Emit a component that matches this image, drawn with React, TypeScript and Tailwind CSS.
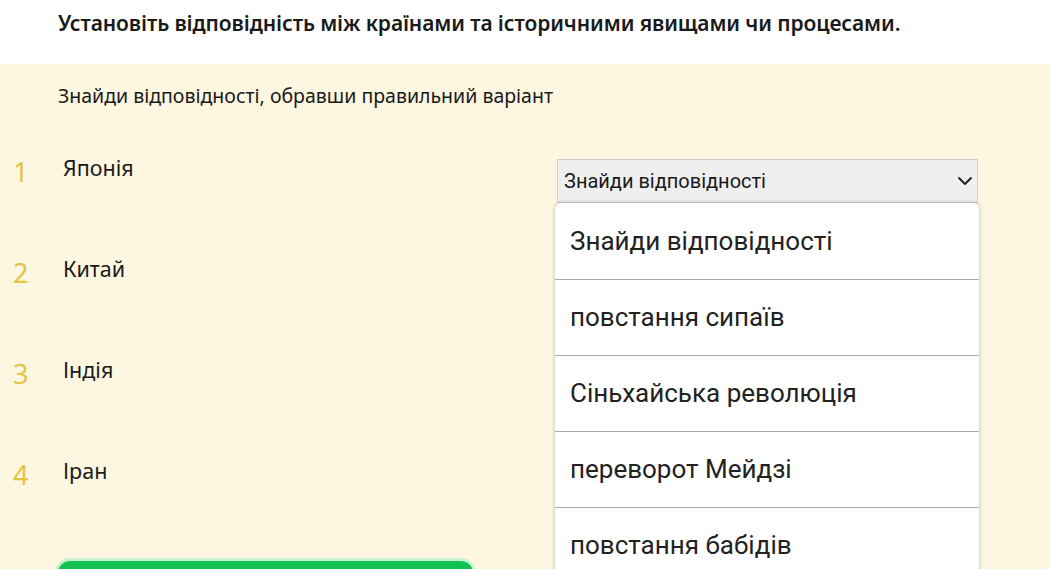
import { ChevronDown } from "lucide-react";

const rows = ["Японія", "Китай", "Індія", "Іран"];
const options = [
  "Знайди відповідності",
  "повстання сипаїв",
  "Сіньхайська революція",
  "переворот Мейдзі",
  "повстання бабідів",
];

export default function App() {
  return (
    <div className="h-[569px] w-[1050px] overflow-hidden bg-white font-['Noto_Sans',sans-serif] text-[#1a1a1a]">
      {/* Header */}
      <div className="flex h-16 items-start px-[58px] pt-[8px]">
        <h1 className="text-[21px] font-semibold tracking-[-0.1px]">
          Установіть відповідність між країнами та історичними явищами чи процесами.
        </h1>
      </div>

      {/* Task body */}
      <div className="relative h-full bg-[#fdf6e0]">
        <p className="px-[58px] pt-[18px] text-[19.5px] leading-[28px]">
          Знайди відповідності, обравши правильний варіант
        </p>

        <div className="mt-[47px] flex flex-col">
          {rows.map((label, i) => (
            <div key={label} className="flex h-[101px] items-start">
              <span className="w-[48px] pt-[1px] pl-[13px] text-[27px] leading-none text-[#e3c444]">
                {i + 1}
              </span>
              <span className="w-[509px] pl-[15px] text-[21.5px] leading-none">
                {label}
              </span>
              {i === 0 && (
                <div className="mt-[2px] flex h-[44px] w-[421px] items-center justify-between border border-[#cfcfcf] bg-[#efefef] pl-[6px] font-['Roboto',sans-serif] text-[20px]">
                  <span>Знайди відповідності</span>
                  <ChevronDown className="h-6 w-6" strokeWidth={1.8} />
                </div>
              )}
            </div>
          ))}
        </div>

        {/* Check button */}
        <div className="ml-[58px] h-10 w-[415px] rounded-t-xl bg-[#12c152] shadow-[0_0_0_3px_#c7f3cf]" />

        {/* Open select menu */}
        <div className="absolute top-[139px] left-[555px] w-[424px] overflow-hidden rounded-t-[6px] bg-white font-['Roboto',sans-serif] shadow-[0_0_4px_rgba(0,0,0,0.25)]">
          {options.map((opt, i) => (
            <div
              key={opt}
              className={`flex h-[76px] items-center px-[15px] text-[26px] text-[#222] ${
                i > 0 ? "border-t border-[#a9a9a9]" : ""
              }`}
            >
              {opt}
            </div>
          ))}
        </div>
      </div>
    </div>
  );
}
